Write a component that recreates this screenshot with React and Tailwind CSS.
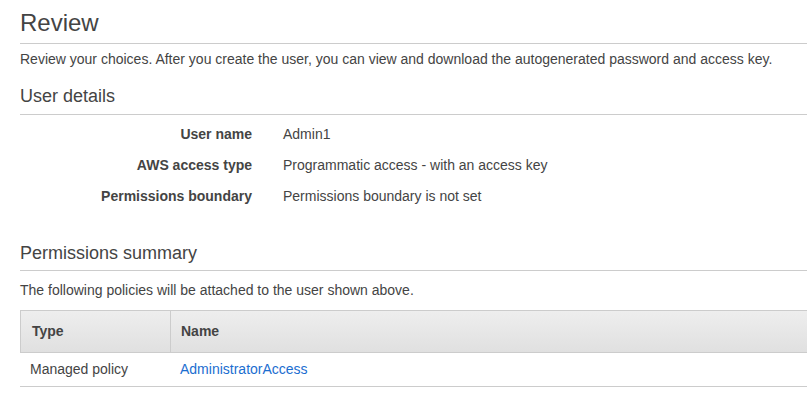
export default function App() {
  const details = [
    { label: 'User name', value: 'Admin1' },
    { label: 'AWS access type', value: 'Programmatic access - with an access key' },
    { label: 'Permissions boundary', value: 'Permissions boundary is not set' },
  ]

  return (
    <div className="bg-white w-[807px] h-[398px] overflow-hidden pl-5 text-[14px] text-[#444] font-['Liberation_Sans',Arial,sans-serif]">
      {/* Review header */}
      <div className="pt-[9px] pb-[6px] border-b border-[#cccccc]">
        <h1 className="text-[24px] leading-[28px] font-normal">Review</h1>
      </div>
      <p className="mt-[5px] leading-[20px]">
        Review your choices. After you create the user, you can view and download the autogenerated password and access key.
      </p>

      {/* User details */}
      <div className="mt-[15px] pb-[6px] border-b border-[#cccccc]">
        <h2 className="text-[18px] leading-[24px] font-normal">User details</h2>
      </div>
      <div className="mt-[9px] flex flex-col">
        {details.map(d => (
          <div key={d.label} className="flex h-[31px] leading-[20px]">
            <div className="w-[232px] text-right font-bold">{d.label}</div>
            <div className="pl-[31px]">{d.value}</div>
          </div>
        ))}
      </div>

      {/* Permissions summary */}
      <div className="mt-[24px] pb-[5px] border-b border-[#cccccc]">
        <h2 className="text-[18px] leading-[24px] font-normal">Permissions summary</h2>
      </div>
      <p className="mt-[9px] leading-[20px]">The following policies will be attached to the user shown above.</p>

      <div className="mt-[10px] w-[800px]">
        <div className="flex h-[43px] border-t border-b border-l border-[#cccccc] bg-gradient-to-b from-[#eeeeee] to-[#e0e0e0] font-bold">
          <div className="w-[150px] px-[11px] flex items-center border-r border-[#cccccc]">Type</div>
          <div className="flex-1 px-[10px] flex items-center">Name</div>
        </div>
        <div className="flex h-[34px] border-b border-[#cccccc]">
          <div className="w-[150px] px-[10px] flex items-center">Managed policy</div>
          <div className="flex-1 px-[10px] flex items-center">
            <a href="#" className="text-[#1b6ed0]">AdministratorAccess</a>
          </div>
        </div>
      </div>
    </div>
  )
}
